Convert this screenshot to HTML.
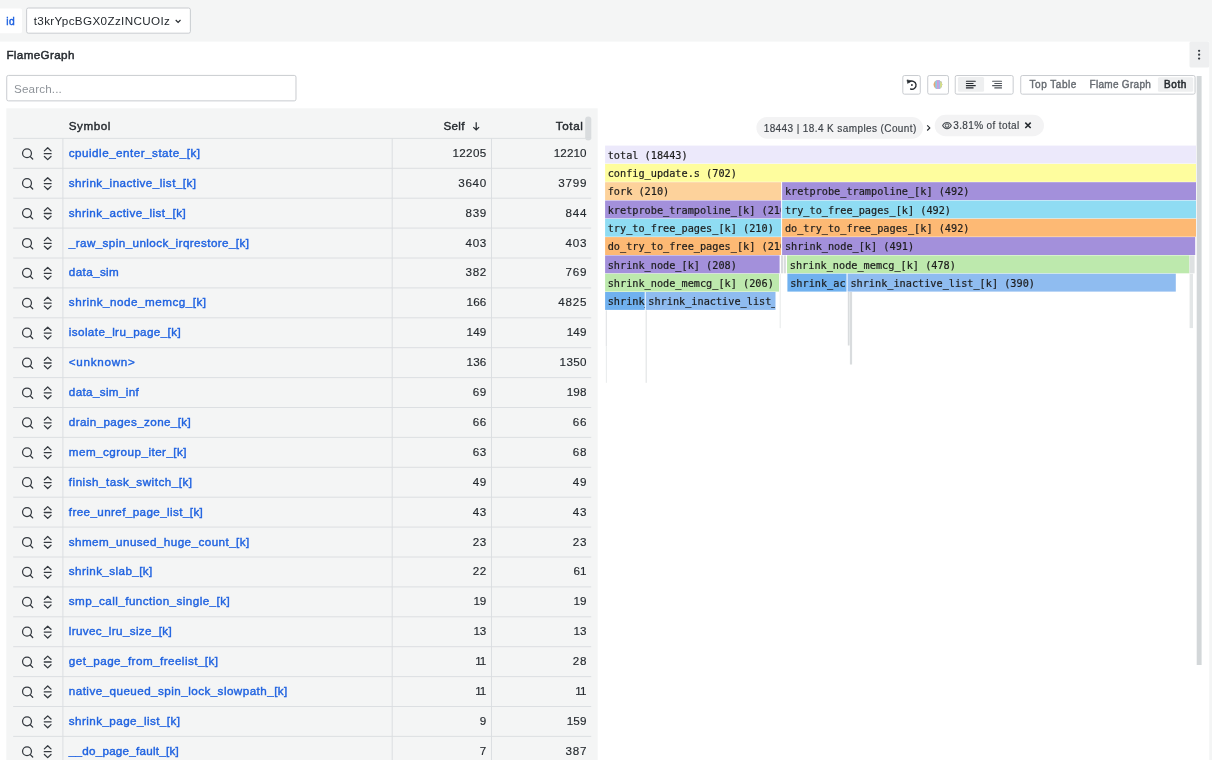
<!DOCTYPE html><html><head><meta charset="utf-8"><title>FlameGraph</title><style>
*{box-sizing:border-box;margin:0;padding:0}
html,body{width:1212px;height:760px;overflow:hidden;background:#f4f5f5;font-family:"Liberation Sans",sans-serif;color:#24292e;}
#shapes{position:absolute;left:0;top:0}
.t{position:absolute;white-space:pre;line-height:14px;height:14px;font-size:11.67px}
.m{-webkit-text-stroke:0.4px currentColor}
.sym{color:#1f62e0}
.num{text-align:right;-webkit-text-stroke:0.15px #24292e}
.s10{font-size:10px}
.fb{position:absolute;height:16.5px;overflow:hidden;white-space:pre;font-family:"DejaVu Sans Mono","Liberation Mono",monospace;font-size:10.22px;line-height:17.5px;color:#1c1c1c;-webkit-text-stroke:0.2px #1c1c1c}
</style></head><body>
<svg id="shapes" width="1212" height="760" viewBox="0 0 1212 760"><rect x="0.00" y="41.60" width="1209.20" height="720.00" rx="0.00" fill="#fff" />
<rect x="-2.00" y="8.50" width="24.00" height="24.80" rx="1.70" fill="#fff" />
<rect x="26.62" y="8.03" width="163.75" height="25.15" rx="1.70" fill="#fff" stroke="#bfc3c7" stroke-width="0.85" />
<path d="M175.7 20.0 L178.1 22.4 L180.5 20.0" fill="none" stroke="#24292e" stroke-width="1.15" />
<rect x="1189.50" y="41.60" width="19.70" height="26.00" rx="1.70" fill="#eeeff0" />
<circle cx="1199.1" cy="50.8" r="1.15" fill="#3a3f45"/>
<circle cx="1199.1" cy="54.7" r="1.15" fill="#3a3f45"/>
<circle cx="1199.1" cy="58.6" r="1.15" fill="#3a3f45"/>
<rect x="6.72" y="75.42" width="289.25" height="25.45" rx="1.70" fill="#fff" stroke="#bfc3c7" stroke-width="0.85" />
<rect x="6.30" y="108.30" width="591.40" height="660.00" rx="0.00" fill="#f4f5f5" />
<path d="M476.2 122.3 V129.8 M473.3 127.1 L476.2 130.0 L479.1 127.1" fill="none" stroke="#24292e" stroke-width="1.20" />
<rect x="585.20" y="116.40" width="6.10" height="24.10" rx="3.00" fill="#d9dcde" />
<path d="M13.2 138.40 H591.2" stroke="#d9dde0" stroke-width="0.9"/>
<path d="M62.90 138.40 V168.30" stroke="#d9dde0" stroke-width="0.9"/>
<path d="M392.20 138.40 V168.30" stroke="#d9dde0" stroke-width="0.9"/>
<path d="M491.50 138.40 V168.30" stroke="#d9dde0" stroke-width="0.9"/>
<circle cx="27.0" cy="153.25" r="4.45" fill="none" stroke="#353a40" stroke-width="1.25"/>
<path d="M30.3 156.65 L32.7 159.05" stroke="#353a40" stroke-width="1.3" stroke-linecap="round"/>
<path d="M44.40 150.90 L47.70 147.80 L51.00 150.90 M44.40 156.50 L47.70 159.60 L51.00 156.50 M44.30 153.70 H51.10" fill="none" stroke="#353a40" stroke-width="1.3" stroke-linecap="round" stroke-linejoin="round"/>
<path d="M13.2 168.30 H591.2" stroke="#d9dde0" stroke-width="0.9"/>
<path d="M62.90 168.30 V198.20" stroke="#d9dde0" stroke-width="0.9"/>
<path d="M392.20 168.30 V198.20" stroke="#d9dde0" stroke-width="0.9"/>
<path d="M491.50 168.30 V198.20" stroke="#d9dde0" stroke-width="0.9"/>
<circle cx="27.0" cy="183.15" r="4.45" fill="none" stroke="#353a40" stroke-width="1.25"/>
<path d="M30.3 186.55 L32.7 188.95" stroke="#353a40" stroke-width="1.3" stroke-linecap="round"/>
<path d="M44.40 180.80 L47.70 177.70 L51.00 180.80 M44.40 186.40 L47.70 189.50 L51.00 186.40 M44.30 183.60 H51.10" fill="none" stroke="#353a40" stroke-width="1.3" stroke-linecap="round" stroke-linejoin="round"/>
<path d="M13.2 198.20 H591.2" stroke="#d9dde0" stroke-width="0.9"/>
<path d="M62.90 198.20 V228.10" stroke="#d9dde0" stroke-width="0.9"/>
<path d="M392.20 198.20 V228.10" stroke="#d9dde0" stroke-width="0.9"/>
<path d="M491.50 198.20 V228.10" stroke="#d9dde0" stroke-width="0.9"/>
<circle cx="27.0" cy="213.05" r="4.45" fill="none" stroke="#353a40" stroke-width="1.25"/>
<path d="M30.3 216.45 L32.7 218.85" stroke="#353a40" stroke-width="1.3" stroke-linecap="round"/>
<path d="M44.40 210.70 L47.70 207.60 L51.00 210.70 M44.40 216.30 L47.70 219.40 L51.00 216.30 M44.30 213.50 H51.10" fill="none" stroke="#353a40" stroke-width="1.3" stroke-linecap="round" stroke-linejoin="round"/>
<path d="M13.2 228.10 H591.2" stroke="#d9dde0" stroke-width="0.9"/>
<path d="M62.90 228.10 V258.00" stroke="#d9dde0" stroke-width="0.9"/>
<path d="M392.20 228.10 V258.00" stroke="#d9dde0" stroke-width="0.9"/>
<path d="M491.50 228.10 V258.00" stroke="#d9dde0" stroke-width="0.9"/>
<circle cx="27.0" cy="242.95" r="4.45" fill="none" stroke="#353a40" stroke-width="1.25"/>
<path d="M30.3 246.35 L32.7 248.75" stroke="#353a40" stroke-width="1.3" stroke-linecap="round"/>
<path d="M44.40 240.60 L47.70 237.50 L51.00 240.60 M44.40 246.20 L47.70 249.30 L51.00 246.20 M44.30 243.40 H51.10" fill="none" stroke="#353a40" stroke-width="1.3" stroke-linecap="round" stroke-linejoin="round"/>
<path d="M13.2 258.00 H591.2" stroke="#d9dde0" stroke-width="0.9"/>
<path d="M62.90 258.00 V287.90" stroke="#d9dde0" stroke-width="0.9"/>
<path d="M392.20 258.00 V287.90" stroke="#d9dde0" stroke-width="0.9"/>
<path d="M491.50 258.00 V287.90" stroke="#d9dde0" stroke-width="0.9"/>
<circle cx="27.0" cy="272.85" r="4.45" fill="none" stroke="#353a40" stroke-width="1.25"/>
<path d="M30.3 276.25 L32.7 278.65" stroke="#353a40" stroke-width="1.3" stroke-linecap="round"/>
<path d="M44.40 270.50 L47.70 267.40 L51.00 270.50 M44.40 276.10 L47.70 279.20 L51.00 276.10 M44.30 273.30 H51.10" fill="none" stroke="#353a40" stroke-width="1.3" stroke-linecap="round" stroke-linejoin="round"/>
<path d="M13.2 287.90 H591.2" stroke="#d9dde0" stroke-width="0.9"/>
<path d="M62.90 287.90 V317.80" stroke="#d9dde0" stroke-width="0.9"/>
<path d="M392.20 287.90 V317.80" stroke="#d9dde0" stroke-width="0.9"/>
<path d="M491.50 287.90 V317.80" stroke="#d9dde0" stroke-width="0.9"/>
<circle cx="27.0" cy="302.75" r="4.45" fill="none" stroke="#353a40" stroke-width="1.25"/>
<path d="M30.3 306.15 L32.7 308.55" stroke="#353a40" stroke-width="1.3" stroke-linecap="round"/>
<path d="M44.40 300.40 L47.70 297.30 L51.00 300.40 M44.40 306.00 L47.70 309.10 L51.00 306.00 M44.30 303.20 H51.10" fill="none" stroke="#353a40" stroke-width="1.3" stroke-linecap="round" stroke-linejoin="round"/>
<path d="M13.2 317.80 H591.2" stroke="#d9dde0" stroke-width="0.9"/>
<path d="M62.90 317.80 V347.70" stroke="#d9dde0" stroke-width="0.9"/>
<path d="M392.20 317.80 V347.70" stroke="#d9dde0" stroke-width="0.9"/>
<path d="M491.50 317.80 V347.70" stroke="#d9dde0" stroke-width="0.9"/>
<circle cx="27.0" cy="332.65" r="4.45" fill="none" stroke="#353a40" stroke-width="1.25"/>
<path d="M30.3 336.05 L32.7 338.45" stroke="#353a40" stroke-width="1.3" stroke-linecap="round"/>
<path d="M44.40 330.30 L47.70 327.20 L51.00 330.30 M44.40 335.90 L47.70 339.00 L51.00 335.90 M44.30 333.10 H51.10" fill="none" stroke="#353a40" stroke-width="1.3" stroke-linecap="round" stroke-linejoin="round"/>
<path d="M13.2 347.70 H591.2" stroke="#d9dde0" stroke-width="0.9"/>
<path d="M62.90 347.70 V377.60" stroke="#d9dde0" stroke-width="0.9"/>
<path d="M392.20 347.70 V377.60" stroke="#d9dde0" stroke-width="0.9"/>
<path d="M491.50 347.70 V377.60" stroke="#d9dde0" stroke-width="0.9"/>
<circle cx="27.0" cy="362.55" r="4.45" fill="none" stroke="#353a40" stroke-width="1.25"/>
<path d="M30.3 365.95 L32.7 368.35" stroke="#353a40" stroke-width="1.3" stroke-linecap="round"/>
<path d="M44.40 360.20 L47.70 357.10 L51.00 360.20 M44.40 365.80 L47.70 368.90 L51.00 365.80 M44.30 363.00 H51.10" fill="none" stroke="#353a40" stroke-width="1.3" stroke-linecap="round" stroke-linejoin="round"/>
<path d="M13.2 377.60 H591.2" stroke="#d9dde0" stroke-width="0.9"/>
<path d="M62.90 377.60 V407.50" stroke="#d9dde0" stroke-width="0.9"/>
<path d="M392.20 377.60 V407.50" stroke="#d9dde0" stroke-width="0.9"/>
<path d="M491.50 377.60 V407.50" stroke="#d9dde0" stroke-width="0.9"/>
<circle cx="27.0" cy="392.45" r="4.45" fill="none" stroke="#353a40" stroke-width="1.25"/>
<path d="M30.3 395.85 L32.7 398.25" stroke="#353a40" stroke-width="1.3" stroke-linecap="round"/>
<path d="M44.40 390.10 L47.70 387.00 L51.00 390.10 M44.40 395.70 L47.70 398.80 L51.00 395.70 M44.30 392.90 H51.10" fill="none" stroke="#353a40" stroke-width="1.3" stroke-linecap="round" stroke-linejoin="round"/>
<path d="M13.2 407.50 H591.2" stroke="#d9dde0" stroke-width="0.9"/>
<path d="M62.90 407.50 V437.40" stroke="#d9dde0" stroke-width="0.9"/>
<path d="M392.20 407.50 V437.40" stroke="#d9dde0" stroke-width="0.9"/>
<path d="M491.50 407.50 V437.40" stroke="#d9dde0" stroke-width="0.9"/>
<circle cx="27.0" cy="422.35" r="4.45" fill="none" stroke="#353a40" stroke-width="1.25"/>
<path d="M30.3 425.75 L32.7 428.15" stroke="#353a40" stroke-width="1.3" stroke-linecap="round"/>
<path d="M44.40 420.00 L47.70 416.90 L51.00 420.00 M44.40 425.60 L47.70 428.70 L51.00 425.60 M44.30 422.80 H51.10" fill="none" stroke="#353a40" stroke-width="1.3" stroke-linecap="round" stroke-linejoin="round"/>
<path d="M13.2 437.40 H591.2" stroke="#d9dde0" stroke-width="0.9"/>
<path d="M62.90 437.40 V467.30" stroke="#d9dde0" stroke-width="0.9"/>
<path d="M392.20 437.40 V467.30" stroke="#d9dde0" stroke-width="0.9"/>
<path d="M491.50 437.40 V467.30" stroke="#d9dde0" stroke-width="0.9"/>
<circle cx="27.0" cy="452.25" r="4.45" fill="none" stroke="#353a40" stroke-width="1.25"/>
<path d="M30.3 455.65 L32.7 458.05" stroke="#353a40" stroke-width="1.3" stroke-linecap="round"/>
<path d="M44.40 449.90 L47.70 446.80 L51.00 449.90 M44.40 455.50 L47.70 458.60 L51.00 455.50 M44.30 452.70 H51.10" fill="none" stroke="#353a40" stroke-width="1.3" stroke-linecap="round" stroke-linejoin="round"/>
<path d="M13.2 467.30 H591.2" stroke="#d9dde0" stroke-width="0.9"/>
<path d="M62.90 467.30 V497.20" stroke="#d9dde0" stroke-width="0.9"/>
<path d="M392.20 467.30 V497.20" stroke="#d9dde0" stroke-width="0.9"/>
<path d="M491.50 467.30 V497.20" stroke="#d9dde0" stroke-width="0.9"/>
<circle cx="27.0" cy="482.15" r="4.45" fill="none" stroke="#353a40" stroke-width="1.25"/>
<path d="M30.3 485.55 L32.7 487.95" stroke="#353a40" stroke-width="1.3" stroke-linecap="round"/>
<path d="M44.40 479.80 L47.70 476.70 L51.00 479.80 M44.40 485.40 L47.70 488.50 L51.00 485.40 M44.30 482.60 H51.10" fill="none" stroke="#353a40" stroke-width="1.3" stroke-linecap="round" stroke-linejoin="round"/>
<path d="M13.2 497.20 H591.2" stroke="#d9dde0" stroke-width="0.9"/>
<path d="M62.90 497.20 V527.10" stroke="#d9dde0" stroke-width="0.9"/>
<path d="M392.20 497.20 V527.10" stroke="#d9dde0" stroke-width="0.9"/>
<path d="M491.50 497.20 V527.10" stroke="#d9dde0" stroke-width="0.9"/>
<circle cx="27.0" cy="512.05" r="4.45" fill="none" stroke="#353a40" stroke-width="1.25"/>
<path d="M30.3 515.45 L32.7 517.85" stroke="#353a40" stroke-width="1.3" stroke-linecap="round"/>
<path d="M44.40 509.70 L47.70 506.60 L51.00 509.70 M44.40 515.30 L47.70 518.40 L51.00 515.30 M44.30 512.50 H51.10" fill="none" stroke="#353a40" stroke-width="1.3" stroke-linecap="round" stroke-linejoin="round"/>
<path d="M13.2 527.10 H591.2" stroke="#d9dde0" stroke-width="0.9"/>
<path d="M62.90 527.10 V557.00" stroke="#d9dde0" stroke-width="0.9"/>
<path d="M392.20 527.10 V557.00" stroke="#d9dde0" stroke-width="0.9"/>
<path d="M491.50 527.10 V557.00" stroke="#d9dde0" stroke-width="0.9"/>
<circle cx="27.0" cy="541.95" r="4.45" fill="none" stroke="#353a40" stroke-width="1.25"/>
<path d="M30.3 545.35 L32.7 547.75" stroke="#353a40" stroke-width="1.3" stroke-linecap="round"/>
<path d="M44.40 539.60 L47.70 536.50 L51.00 539.60 M44.40 545.20 L47.70 548.30 L51.00 545.20 M44.30 542.40 H51.10" fill="none" stroke="#353a40" stroke-width="1.3" stroke-linecap="round" stroke-linejoin="round"/>
<path d="M13.2 557.00 H591.2" stroke="#d9dde0" stroke-width="0.9"/>
<path d="M62.90 557.00 V586.90" stroke="#d9dde0" stroke-width="0.9"/>
<path d="M392.20 557.00 V586.90" stroke="#d9dde0" stroke-width="0.9"/>
<path d="M491.50 557.00 V586.90" stroke="#d9dde0" stroke-width="0.9"/>
<circle cx="27.0" cy="571.85" r="4.45" fill="none" stroke="#353a40" stroke-width="1.25"/>
<path d="M30.3 575.25 L32.7 577.65" stroke="#353a40" stroke-width="1.3" stroke-linecap="round"/>
<path d="M44.40 569.50 L47.70 566.40 L51.00 569.50 M44.40 575.10 L47.70 578.20 L51.00 575.10 M44.30 572.30 H51.10" fill="none" stroke="#353a40" stroke-width="1.3" stroke-linecap="round" stroke-linejoin="round"/>
<path d="M13.2 586.90 H591.2" stroke="#d9dde0" stroke-width="0.9"/>
<path d="M62.90 586.90 V616.80" stroke="#d9dde0" stroke-width="0.9"/>
<path d="M392.20 586.90 V616.80" stroke="#d9dde0" stroke-width="0.9"/>
<path d="M491.50 586.90 V616.80" stroke="#d9dde0" stroke-width="0.9"/>
<circle cx="27.0" cy="601.75" r="4.45" fill="none" stroke="#353a40" stroke-width="1.25"/>
<path d="M30.3 605.15 L32.7 607.55" stroke="#353a40" stroke-width="1.3" stroke-linecap="round"/>
<path d="M44.40 599.40 L47.70 596.30 L51.00 599.40 M44.40 605.00 L47.70 608.10 L51.00 605.00 M44.30 602.20 H51.10" fill="none" stroke="#353a40" stroke-width="1.3" stroke-linecap="round" stroke-linejoin="round"/>
<path d="M13.2 616.80 H591.2" stroke="#d9dde0" stroke-width="0.9"/>
<path d="M62.90 616.80 V646.70" stroke="#d9dde0" stroke-width="0.9"/>
<path d="M392.20 616.80 V646.70" stroke="#d9dde0" stroke-width="0.9"/>
<path d="M491.50 616.80 V646.70" stroke="#d9dde0" stroke-width="0.9"/>
<circle cx="27.0" cy="631.65" r="4.45" fill="none" stroke="#353a40" stroke-width="1.25"/>
<path d="M30.3 635.05 L32.7 637.45" stroke="#353a40" stroke-width="1.3" stroke-linecap="round"/>
<path d="M44.40 629.30 L47.70 626.20 L51.00 629.30 M44.40 634.90 L47.70 638.00 L51.00 634.90 M44.30 632.10 H51.10" fill="none" stroke="#353a40" stroke-width="1.3" stroke-linecap="round" stroke-linejoin="round"/>
<path d="M13.2 646.70 H591.2" stroke="#d9dde0" stroke-width="0.9"/>
<path d="M62.90 646.70 V676.60" stroke="#d9dde0" stroke-width="0.9"/>
<path d="M392.20 646.70 V676.60" stroke="#d9dde0" stroke-width="0.9"/>
<path d="M491.50 646.70 V676.60" stroke="#d9dde0" stroke-width="0.9"/>
<circle cx="27.0" cy="661.55" r="4.45" fill="none" stroke="#353a40" stroke-width="1.25"/>
<path d="M30.3 664.95 L32.7 667.35" stroke="#353a40" stroke-width="1.3" stroke-linecap="round"/>
<path d="M44.40 659.20 L47.70 656.10 L51.00 659.20 M44.40 664.80 L47.70 667.90 L51.00 664.80 M44.30 662.00 H51.10" fill="none" stroke="#353a40" stroke-width="1.3" stroke-linecap="round" stroke-linejoin="round"/>
<path d="M13.2 676.60 H591.2" stroke="#d9dde0" stroke-width="0.9"/>
<path d="M62.90 676.60 V706.50" stroke="#d9dde0" stroke-width="0.9"/>
<path d="M392.20 676.60 V706.50" stroke="#d9dde0" stroke-width="0.9"/>
<path d="M491.50 676.60 V706.50" stroke="#d9dde0" stroke-width="0.9"/>
<circle cx="27.0" cy="691.45" r="4.45" fill="none" stroke="#353a40" stroke-width="1.25"/>
<path d="M30.3 694.85 L32.7 697.25" stroke="#353a40" stroke-width="1.3" stroke-linecap="round"/>
<path d="M44.40 689.10 L47.70 686.00 L51.00 689.10 M44.40 694.70 L47.70 697.80 L51.00 694.70 M44.30 691.90 H51.10" fill="none" stroke="#353a40" stroke-width="1.3" stroke-linecap="round" stroke-linejoin="round"/>
<path d="M13.2 706.50 H591.2" stroke="#d9dde0" stroke-width="0.9"/>
<path d="M62.90 706.50 V736.40" stroke="#d9dde0" stroke-width="0.9"/>
<path d="M392.20 706.50 V736.40" stroke="#d9dde0" stroke-width="0.9"/>
<path d="M491.50 706.50 V736.40" stroke="#d9dde0" stroke-width="0.9"/>
<circle cx="27.0" cy="721.35" r="4.45" fill="none" stroke="#353a40" stroke-width="1.25"/>
<path d="M30.3 724.75 L32.7 727.15" stroke="#353a40" stroke-width="1.3" stroke-linecap="round"/>
<path d="M44.40 719.00 L47.70 715.90 L51.00 719.00 M44.40 724.60 L47.70 727.70 L51.00 724.60 M44.30 721.80 H51.10" fill="none" stroke="#353a40" stroke-width="1.3" stroke-linecap="round" stroke-linejoin="round"/>
<path d="M13.2 736.40 H591.2" stroke="#d9dde0" stroke-width="0.9"/>
<path d="M62.90 736.40 V766.30" stroke="#d9dde0" stroke-width="0.9"/>
<path d="M392.20 736.40 V766.30" stroke="#d9dde0" stroke-width="0.9"/>
<path d="M491.50 736.40 V766.30" stroke="#d9dde0" stroke-width="0.9"/>
<circle cx="27.0" cy="751.25" r="4.45" fill="none" stroke="#353a40" stroke-width="1.25"/>
<path d="M30.3 754.65 L32.7 757.05" stroke="#353a40" stroke-width="1.3" stroke-linecap="round"/>
<path d="M44.40 748.90 L47.70 745.80 L51.00 748.90 M44.40 754.50 L47.70 757.60 L51.00 754.50 M44.30 751.70 H51.10" fill="none" stroke="#353a40" stroke-width="1.3" stroke-linecap="round" stroke-linejoin="round"/>
<rect x="902.82" y="75.52" width="17.45" height="18.65" rx="1.70" fill="#fff" stroke="#bfc3c7" stroke-width="0.85" />
<rect x="927.72" y="75.52" width="20.75" height="18.65" rx="1.70" fill="#fff" stroke="#bfc3c7" stroke-width="0.85" />
<rect x="955.22" y="75.52" width="57.95" height="18.65" rx="1.70" fill="#fff" stroke="#bfc3c7" stroke-width="0.85" />
<rect x="1020.72" y="75.52" width="174.35" height="18.65" rx="1.70" fill="#fff" stroke="#bfc3c7" stroke-width="0.85" />
<rect x="957.90" y="77.10" width="26.20" height="14.70" rx="1.50" fill="#eeeff0" />
<rect x="1157.90" y="77.30" width="35.30" height="14.50" rx="1.50" fill="#eeeff0" />
<path d="M909.3 82.0 A4.1 4.1 0 1 1 910.6 89.0" fill="none" stroke="#24292e" stroke-width="1.35" stroke-linecap="round"/>
<path d="M907.0 79.9 L910.6 80.7 L907.8 83.5 Z" fill="#24292e" stroke="#24292e" stroke-width="0.60" stroke-linejoin="round"/>
<circle cx="911.9" cy="85.0" r="0.9" fill="#24292e"/>
<defs><clipPath id="cc"><circle cx="937.85" cy="84.6" r="4.3"/></clipPath></defs><g clip-path="url(#cc)">
<rect x="933.00" y="80.00" width="10.00" height="10.00" rx="0.00" fill="#e5a773" />
<rect x="935.30" y="80.00" width="10.00" height="10.00" rx="0.00" fill="#8fc8e8" />
<rect x="937.00" y="80.00" width="10.00" height="10.00" rx="0.00" fill="#d59ad6" />
<rect x="938.60" y="80.00" width="10.00" height="10.00" rx="0.00" fill="#9db7ee" />
<rect x="940.20" y="80.00" width="10.00" height="10.00" rx="0.00" fill="#d9e27c" />
</g>
<rect x="965.86" y="80.67" width="9.98" height="1.11" rx="0.50" fill="#24292e" />
<rect x="965.86" y="82.89" width="7.76" height="1.11" rx="0.50" fill="#24292e" />
<rect x="965.86" y="85.10" width="9.98" height="1.11" rx="0.50" fill="#24292e" />
<rect x="965.86" y="87.32" width="7.76" height="1.11" rx="0.50" fill="#24292e" />
<rect x="992.06" y="80.67" width="9.98" height="1.11" rx="0.50" fill="#50555b" />
<rect x="994.28" y="82.89" width="7.76" height="1.11" rx="0.50" fill="#50555b" />
<rect x="992.06" y="85.10" width="9.98" height="1.11" rx="0.50" fill="#50555b" />
<rect x="994.28" y="87.32" width="7.76" height="1.11" rx="0.50" fill="#50555b" />
<rect x="1196.70" y="76.00" width="4.90" height="589.00" rx="0.00" fill="#d3d7d9" />
<rect x="756.40" y="116.90" width="166.60" height="21.90" rx="11.00" fill="#f3f3f4" />
<path d="M927.2 125.3 L929.8 127.9 L927.2 130.5" fill="none" stroke="#24292e" stroke-width="1.15" />
<rect x="934.70" y="114.80" width="109.30" height="21.40" rx="10.70" fill="#f3f3f4" />
<path d="M942.6 125.6 C944.6 121.4 949.4 121.4 951.4 125.6 C949.4 129.8 944.6 129.8 942.6 125.6 Z" fill="none" stroke="#4a4f55" stroke-width="1.05" />
<circle cx="947.0" cy="125.6" r="1.75" fill="none" stroke="#4a4f55" stroke-width="1.0"/>
<path d="M1025.3 122.6 L1030.7 128 M1030.7 122.6 L1025.3 128" fill="none" stroke="#24292e" stroke-width="1.50" />
<rect x="605.10" y="145.60" width="590.90" height="17.90" rx="0.00" fill="#ece9fb" />
<rect x="605.10" y="163.90" width="590.90" height="17.90" rx="0.00" fill="#fefd9e" />
<rect x="605.10" y="182.20" width="176.00" height="17.90" rx="0.00" fill="#fdd29b" />
<rect x="782.10" y="182.20" width="413.90" height="17.90" rx="0.00" fill="#a390db" />
<rect x="605.10" y="200.50" width="176.00" height="17.90" rx="0.00" fill="#a390db" />
<rect x="782.10" y="200.50" width="413.90" height="17.90" rx="0.00" fill="#8fdcf3" />
<rect x="605.10" y="218.80" width="176.00" height="17.90" rx="0.00" fill="#8fdcf3" />
<rect x="782.10" y="218.80" width="413.90" height="17.90" rx="0.00" fill="#fdb974" />
<rect x="605.10" y="237.10" width="176.00" height="17.90" rx="0.00" fill="#fdb974" />
<rect x="782.10" y="237.10" width="413.10" height="17.90" rx="0.00" fill="#a390db" />
<rect x="605.10" y="255.40" width="174.50" height="17.90" rx="0.00" fill="#a390db" />
<rect x="787.00" y="255.40" width="402.40" height="17.90" rx="0.00" fill="#bde9ad" />
<rect x="605.10" y="273.70" width="173.90" height="17.90" rx="0.00" fill="#bde9ad" />
<rect x="787.40" y="273.70" width="59.10" height="17.90" rx="0.00" fill="#70b1ef" />
<rect x="847.60" y="273.70" width="328.20" height="17.90" rx="0.00" fill="#8fbcf0" />
<rect x="605.10" y="292.00" width="39.60" height="17.90" rx="0.00" fill="#70b1ef" />
<rect x="645.70" y="292.00" width="129.80" height="17.90" rx="0.00" fill="#8fbcf0" />
<rect x="781.00" y="255.40" width="2.00" height="17.90" rx="0.00" fill="#d9dcde" />
<rect x="783.70" y="255.40" width="2.20" height="17.90" rx="0.00" fill="#d9dcde" />
<rect x="779.70" y="273.70" width="0.90" height="54.50" rx="0.00" fill="#e3e6e7" />
<rect x="1189.50" y="255.40" width="5.10" height="17.90" rx="0.00" fill="#dee1e2" />
<rect x="1189.60" y="273.70" width="3.40" height="54.40" rx="0.00" fill="#e3e6e7" />
<rect x="847.80" y="292.00" width="1.80" height="53.50" rx="0.00" fill="#d9dcde" />
<rect x="849.90" y="292.00" width="2.20" height="72.50" rx="0.00" fill="#d9dcde" />
<rect x="605.80" y="310.30" width="0.90" height="36.00" rx="0.00" fill="#d9dcde" />
<rect x="605.90" y="346.30" width="0.80" height="36.50" rx="0.00" fill="#e3e6e7" />
<rect x="645.70" y="310.30" width="0.90" height="72.50" rx="0.00" fill="#d9dcde" /></svg>
<div id="txt" style="position:absolute;left:0;top:0;width:1212px;height:760px;will-change:transform">
<div class="t s10 m" style="left:6.30px;top:14.80px;color:#1f62e0;letter-spacing:0.5px;font-size:10.3px">id</div>
<div class="t " style="left:33.70px;top:14.30px;letter-spacing:0.36px">t3krYpcBGX0ZzINCUOIz</div>
<div class="t m" style="left:6.40px;top:47.50px;letter-spacing:0.36px;-webkit-text-stroke-width:0.45px">FlameGraph</div>
<div class="t " style="left:14.00px;top:81.50px;color:#8e9399;letter-spacing:0.15px">Search...</div>
<div class="t m" style="left:68.70px;top:118.80px;letter-spacing:0.55px">Symbol</div>
<div class="t m" style="left:443.60px;top:118.80px;letter-spacing:0.25px">Self</div>
<div class="t m" style="right:628.60px;top:118.80px;letter-spacing:0.6px">Total</div>
<div class="t sym m" style="left:68.80px;top:145.80px;letter-spacing:0.486px">cpuidle_enter_state_[k]</div>
<div class="t num" style="right:725.33px;top:145.80px;letter-spacing:0.370px">12205</div>
<div class="t num" style="right:625.57px;top:145.80px;letter-spacing:0.030px">12210</div>
<div class="t sym m" style="left:68.80px;top:175.70px;letter-spacing:0.461px">shrink_inactive_list_[k]</div>
<div class="t num" style="right:724.99px;top:175.70px;letter-spacing:0.710px">3640</div>
<div class="t num" style="right:624.89px;top:175.70px;letter-spacing:0.710px">3799</div>
<div class="t sym m" style="left:68.80px;top:205.60px;letter-spacing:0.443px">shrink_active_list_[k]</div>
<div class="t num" style="right:724.99px;top:205.60px;letter-spacing:0.710px">839</div>
<div class="t num" style="right:624.89px;top:205.60px;letter-spacing:0.710px">844</div>
<div class="t sym m" style="left:68.80px;top:235.50px;letter-spacing:0.413px">_raw_spin_unlock_irqrestore_[k]</div>
<div class="t num" style="right:724.99px;top:235.50px;letter-spacing:0.710px">403</div>
<div class="t num" style="right:624.89px;top:235.50px;letter-spacing:0.710px">403</div>
<div class="t sym m" style="left:68.80px;top:265.40px;letter-spacing:0.386px">data_sim</div>
<div class="t num" style="right:724.99px;top:265.40px;letter-spacing:0.710px">382</div>
<div class="t num" style="right:624.89px;top:265.40px;letter-spacing:0.710px">769</div>
<div class="t sym m" style="left:68.80px;top:295.30px;letter-spacing:0.515px">shrink_node_memcg_[k]</div>
<div class="t num" style="right:725.56px;top:295.30px;letter-spacing:0.143px">166</div>
<div class="t num" style="right:624.89px;top:295.30px;letter-spacing:0.710px">4825</div>
<div class="t sym m" style="left:68.80px;top:325.20px;letter-spacing:0.395px">isolate_lru_page_[k]</div>
<div class="t num" style="right:725.56px;top:325.20px;letter-spacing:0.143px">149</div>
<div class="t num" style="right:625.46px;top:325.20px;letter-spacing:0.143px">149</div>
<div class="t sym m" style="left:68.80px;top:355.10px;letter-spacing:0.725px">&lt;unknown&gt;</div>
<div class="t num" style="right:725.56px;top:355.10px;letter-spacing:0.143px">136</div>
<div class="t num" style="right:625.32px;top:355.10px;letter-spacing:0.285px">1350</div>
<div class="t sym m" style="left:68.80px;top:385.00px;letter-spacing:0.355px">data_sim_inf</div>
<div class="t num" style="right:724.99px;top:385.00px;letter-spacing:0.710px">69</div>
<div class="t num" style="right:625.46px;top:385.00px;letter-spacing:0.143px">198</div>
<div class="t sym m" style="left:68.80px;top:414.90px;letter-spacing:0.384px">drain_pages_zone_[k]</div>
<div class="t num" style="right:724.99px;top:414.90px;letter-spacing:0.710px">66</div>
<div class="t num" style="right:624.89px;top:414.90px;letter-spacing:0.710px">66</div>
<div class="t sym m" style="left:68.80px;top:444.80px;letter-spacing:0.461px">mem_cgroup_iter_[k]</div>
<div class="t num" style="right:724.99px;top:444.80px;letter-spacing:0.710px">63</div>
<div class="t num" style="right:624.89px;top:444.80px;letter-spacing:0.710px">68</div>
<div class="t sym m" style="left:68.80px;top:474.70px;letter-spacing:0.500px">finish_task_switch_[k]</div>
<div class="t num" style="right:724.99px;top:474.70px;letter-spacing:0.710px">49</div>
<div class="t num" style="right:624.89px;top:474.70px;letter-spacing:0.710px">49</div>
<div class="t sym m" style="left:68.80px;top:504.60px;letter-spacing:0.391px">free_unref_page_list_[k]</div>
<div class="t num" style="right:724.99px;top:504.60px;letter-spacing:0.710px">43</div>
<div class="t num" style="right:624.89px;top:504.60px;letter-spacing:0.710px">43</div>
<div class="t sym m" style="left:68.80px;top:534.50px;letter-spacing:0.435px">shmem_unused_huge_count_[k]</div>
<div class="t num" style="right:724.99px;top:534.50px;letter-spacing:0.710px">23</div>
<div class="t num" style="right:624.89px;top:534.50px;letter-spacing:0.710px">23</div>
<div class="t sym m" style="left:68.80px;top:564.40px;letter-spacing:0.414px">shrink_slab_[k]</div>
<div class="t num" style="right:724.99px;top:564.40px;letter-spacing:0.710px">22</div>
<div class="t num" style="right:625.74px;top:564.40px;letter-spacing:-0.140px">61</div>
<div class="t sym m" style="left:68.80px;top:594.30px;letter-spacing:0.441px">smp_call_function_single_[k]</div>
<div class="t num" style="right:725.84px;top:594.30px;letter-spacing:-0.140px">19</div>
<div class="t num" style="right:625.74px;top:594.30px;letter-spacing:-0.140px">19</div>
<div class="t sym m" style="left:68.80px;top:624.20px;letter-spacing:0.356px">lruvec_lru_size_[k]</div>
<div class="t num" style="right:725.84px;top:624.20px;letter-spacing:-0.140px">13</div>
<div class="t num" style="right:625.74px;top:624.20px;letter-spacing:-0.140px">13</div>
<div class="t sym m" style="left:68.80px;top:654.10px;letter-spacing:0.448px">get_page_from_freelist_[k]</div>
<div class="t num" style="right:726.69px;top:654.10px;letter-spacing:-0.990px">11</div>
<div class="t num" style="right:624.89px;top:654.10px;letter-spacing:0.710px">28</div>
<div class="t sym m" style="left:68.80px;top:684.00px;letter-spacing:0.449px">native_queued_spin_lock_slowpath_[k]</div>
<div class="t num" style="right:726.69px;top:684.00px;letter-spacing:-0.990px">11</div>
<div class="t num" style="right:626.59px;top:684.00px;letter-spacing:-0.990px">11</div>
<div class="t sym m" style="left:68.80px;top:713.90px;letter-spacing:0.426px">shrink_page_list_[k]</div>
<div class="t num" style="right:724.99px;top:713.90px;letter-spacing:0.710px">9</div>
<div class="t num" style="right:625.46px;top:713.90px;letter-spacing:0.143px">159</div>
<div class="t sym m" style="left:68.80px;top:743.80px;letter-spacing:0.239px">__do_page_fault_[k]</div>
<div class="t num" style="right:724.99px;top:743.80px;letter-spacing:0.710px">7</div>
<div class="t num" style="right:624.89px;top:743.80px;letter-spacing:0.710px">387</div>
<div class="t s10 m" style="left:1029.60px;top:78.40px;color:#666b71;letter-spacing:0.5px">Top Table</div>
<div class="t s10 m" style="left:1089.50px;top:78.40px;color:#666b71;letter-spacing:0.3px">Flame Graph</div>
<div class="t s10 m" style="left:1164.00px;top:78.40px;color:#24292e;letter-spacing:0.6px;-webkit-text-stroke-width:0.5px">Both</div>
<div class="t s10" style="left:763.70px;top:121.60px;color:#3c4147;letter-spacing:0.4px;-webkit-text-stroke:0.15px #3c4147">18443 | 18.4 K samples (Count)</div>
<div class="t s10" style="left:953.20px;top:119.40px;color:#3c4147;letter-spacing:0.38px;-webkit-text-stroke:0.15px #3c4147">3.81% of total</div>
<div class="fb" style="left:607.70px;top:146.80px;width:588.30px">total (18443)</div>
<div class="fb" style="left:607.70px;top:165.10px;width:588.30px">config_update.s (702)</div>
<div class="fb" style="left:607.70px;top:183.40px;width:173.40px">fork (210)</div>
<div class="fb" style="left:784.90px;top:183.40px;width:411.10px">kretprobe_trampoline_[k] (492)</div>
<div class="fb" style="left:607.70px;top:201.70px;width:173.40px">kretprobe_trampoline_[k] (210)</div>
<div class="fb" style="left:784.90px;top:201.70px;width:411.10px">try_to_free_pages_[k] (492)</div>
<div class="fb" style="left:607.70px;top:220.00px;width:173.40px">try_to_free_pages_[k] (210)</div>
<div class="fb" style="left:784.90px;top:220.00px;width:411.10px">do_try_to_free_pages_[k] (492)</div>
<div class="fb" style="left:607.70px;top:238.30px;width:173.40px">do_try_to_free_pages_[k] (210)</div>
<div class="fb" style="left:784.90px;top:238.30px;width:410.30px">shrink_node_[k] (491)</div>
<div class="fb" style="left:607.70px;top:256.60px;width:171.90px">shrink_node_[k] (208)</div>
<div class="fb" style="left:789.80px;top:256.60px;width:399.60px">shrink_node_memcg_[k] (478)</div>
<div class="fb" style="left:607.70px;top:274.90px;width:171.30px">shrink_node_memcg_[k] (206)</div>
<div class="fb" style="left:790.20px;top:274.90px;width:56.30px">shrink_active_list_[k]</div>
<div class="fb" style="left:850.40px;top:274.90px;width:325.40px">shrink_inactive_list_[k] (390)</div>
<div class="fb" style="left:607.70px;top:293.20px;width:37.00px">shrink_active_list_[k]</div>
<div class="fb" style="left:648.30px;top:293.20px;width:127.20px">shrink_inactive_list_[k]</div>
</div>
</body></html>
